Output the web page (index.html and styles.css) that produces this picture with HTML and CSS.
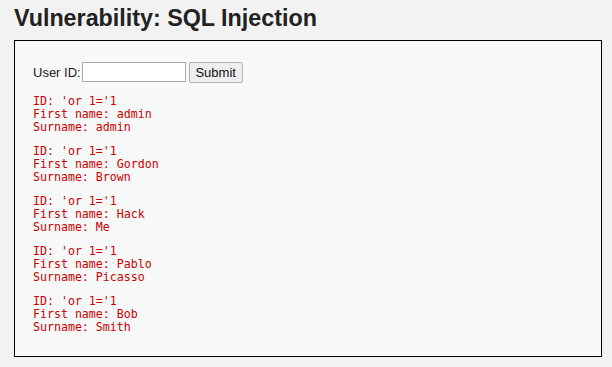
FILE: index.html
```html
<!DOCTYPE html>
<html>
<head>
<meta charset="utf-8">
<link rel="stylesheet" href="styles.css">
</head>
<body>
<div class="page">
  <h1 class="title">Vulnerability: SQL Injection</h1>
  <div class="vulnerable_code_area">
    <form class="form">
      <span class="label">User ID:</span>
      <input type="text" class="field">
      <button type="button" class="submit">Submit</button>
    </form>
    <pre class="result">ID: 'or 1='1
First name: admin
Surname: admin</pre>
    <pre class="result">ID: 'or 1='1
First name: Gordon
Surname: Brown</pre>
    <pre class="result">ID: 'or 1='1
First name: Hack
Surname: Me</pre>
    <pre class="result">ID: 'or 1='1
First name: Pablo
Surname: Picasso</pre>
    <pre class="result">ID: 'or 1='1
First name: Bob
Surname: Smith</pre>
  </div>
</div>
</body>
</html>
```
FILE: styles.css
```css
html, body {
  margin: 0;
  padding: 0;
  background: #f2f2f2;
}
.page {
  padding: 0 10px 0 14px;
  font-family: "Liberation Sans", Arial, sans-serif;
}
.title {
  margin: 0;
  padding-top: 5px;
  height: 35px;
  box-sizing: border-box;
  font-size: 23.3px;
  line-height: 26px;
  font-weight: bold;
  color: #222;
}
.vulnerable_code_area {
  border: 1px solid #000;
  background: #f7f8f8;
  padding: 20px 18px;
  box-sizing: border-box;
  width: 588px;
  height: 317px;
  margin-top: 5px;
}
.form {
  display: flex;
  align-items: center;
  height: 22px;
  font-size: 13px;
  color: #222;
  margin-bottom: 12px;
}
.field {
  width: 104px;
  height: 20px;
  box-sizing: border-box;
  border: 1px solid #a9a9a9;
  background: #fff;
  margin: 0 3px 0 1px;
  padding: 0;
}
.submit {
  height: 21px;
  width: 54px;
  font-family: "Liberation Sans", Arial, sans-serif;
  font-size: 13px;
  color: #111;
  background: #eee;
  border: 1px solid #b3b3b3;
  border-radius: 2px;
  padding: 0;
}
.result {
  margin: 0 0 11px 0;
  height: 39px;
  font-family: "DejaVu Sans Mono", monospace;
  font-size: 11.6px;
  line-height: 13px;
  color: #c00;
}
```
